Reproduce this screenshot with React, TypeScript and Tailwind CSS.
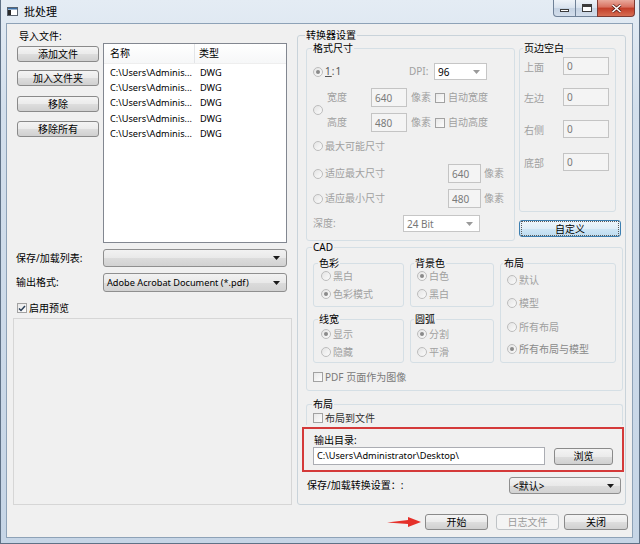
import React from "react";

const DIS = "text-[#a0a0a0]";

function Radio({ checked }: { checked?: boolean }) {
  return (
    <span className="flex h-[10px] w-[10px] shrink-0 items-center justify-center rounded-full border border-[#bdbdbd] bg-[linear-gradient(135deg,#e4e4e4,#fbfbfb)]">
      {checked && <span className="h-[4px] w-[4px] rounded-full bg-[#8a8a8a]" />}
    </span>
  );
}

function Check({ checked }: { checked?: boolean }) {
  return (
    <span className="flex h-[10px] w-[10px] shrink-0 items-center justify-center border border-[#a2a2a2] bg-[linear-gradient(135deg,#e8e8e8,#fdfdfd)]">
      {checked && (
        <svg width="8" height="7" viewBox="0 0 8 7">
          <path d="M1 3.5 L3 5.5 L7 1" fill="none" stroke="#2b3f57" strokeWidth="1.5" />
        </svg>
      )}
    </span>
  );
}

function Btn({
  children,
  className = "",
  kind = "normal",
}: {
  children: React.ReactNode;
  className?: string;
  kind?: "normal" | "disabled" | "focus";
}) {
  const style =
    kind === "disabled"
      ? "border-[#bfc3c6] bg-[#f4f4f4] text-[#9a9a9a]"
      : kind === "focus"
      ? "border-[#3c7fb1] bg-[linear-gradient(#eef6fb,#e0eef8_50%,#cfe6f5_50%,#bddcf0)] text-black"
      : "border-[#8a8a8a] bg-[linear-gradient(#f4f4f4,#ebebeb_50%,#dedede_50%,#d0d0d0)] text-black";
  return (
    <div
      className={`flex shrink-0 items-center justify-center rounded-[3px] border leading-[12px] ${style} ${className}`}
    >
      {kind === "focus" ? (
        <div className="m-[1px] flex h-full w-full items-center justify-center border border-dotted border-[#5a5a5a]">
          {children}
        </div>
      ) : (
        children
      )}
    </div>
  );
}

function Arrow({ color }: { color: string }) {
  return (
    <svg width="7" height="4" viewBox="0 0 7 4">
      <path d="M0 0h7L3.5 4z" fill={color} />
    </svg>
  );
}

function Combo({
  value,
  className = "",
  flat,
  latin,
}: {
  value: string;
  className?: string;
  flat?: boolean;
  latin?: boolean;
}) {
  return (
    <div
      className={`flex shrink-0 items-center justify-between pl-[3px] pr-[6px] ${
        flat
          ? "border border-[#c6c6c6] bg-white"
          : "rounded-[3px] border border-[#8f8f8f] bg-[linear-gradient(#f2f2f2,#e9e9e9_50%,#dcdcdc_50%,#d2d2d2)]"
      } ${className}`}
    >
      <span className={`leading-[12px] ${latin ? "text-[9.2px]" : ""}`}>{value}</span>
      <Arrow color={flat ? "#9a9a9a" : "#1a1a1a"} />
    </div>
  );
}

function TBox({
  value,
  className = "",
  top,
}: {
  value: string;
  className?: string;
  top?: boolean;
}) {
  return (
    <div
      className={`flex shrink-0 border border-[#c4c4c4] bg-[#f4f4f4] pl-[3px] leading-[12px] text-[#7a7a7a] ${
        top ? "items-start pt-[2px]" : "items-center"
      } ${className}`}
    >
      {value}
    </div>
  );
}

function Legend({ children, className = "" }: { children: React.ReactNode; className?: string }) {
  return <legend className={`px-[1px] leading-[12px] ${className}`}>{children}</legend>;
}

function AppIcon() {
  return (
    <svg width="11" height="9" viewBox="0 0 11 9">
      <rect x="0.5" y="0.5" width="10" height="8" fill="#fff" stroke="#5a6470" />
      <rect x="1" y="1" width="9" height="1.5" fill="#3a6ea5" />
      <rect x="1" y="3" width="3" height="5" fill="#2a2a2a" />
    </svg>
  );
}

export default function App() {
  const files = [1, 2, 3, 4, 5];
  return (
    <div className="flex h-[544px] w-[640px] flex-col overflow-hidden border-x border-b border-[#5f7186] bg-[linear-gradient(#e4ecf4,#d3dfec_20%,#c6d5e6)] font-['Noto_Sans','Noto_Sans_CJK_SC',sans-serif] text-[10px] text-black">
      {/* title bar */}
      <div className="flex h-[23px] shrink-0 items-start">
        <div className="ml-[6px] mt-[7px]">
          <AppIcon />
        </div>
        <div className="ml-[6px] mt-[4px] text-[11px] leading-[15px] text-black">批处理</div>
        <div className="ml-auto mr-[4px] flex">
          <div className="flex h-[17px] w-[23px] items-center justify-center rounded-bl-[4px] border border-t-0 border-[#6f8197] bg-[linear-gradient(#eef3f8,#d8e2ee_50%,#c4d2e2_50%,#d3deeb)]">
            <span className="mt-[5px] h-[3px] w-[9px] border border-[#3c3c3c] bg-white" />
          </div>
          <div className="flex h-[17px] w-[21px] items-center justify-center border-b border-[#6f8197] bg-[linear-gradient(#eef3f8,#d8e2ee_50%,#c4d2e2_50%,#d3deeb)]">
            <span className="h-[8px] w-[10px] border border-t-[3px] border-[#3c3c3c] bg-white" />
          </div>
          <div className="flex h-[17px] w-[38px] items-center justify-center rounded-br-[4px] border border-t-0 border-[#7e3a32] bg-[linear-gradient(#e9a99c,#d8705f_45%,#c23d28_50%,#d66d52)]">
            <svg width="11" height="9" viewBox="0 0 11 9">
              <path d="M1.5 1 L9.5 8 M9.5 1 L1.5 8" stroke="#5a1e16" strokeWidth="3" />
              <path d="M1.5 1 L9.5 8 M9.5 1 L1.5 8" stroke="#ffffff" strokeWidth="1.6" />
            </svg>
          </div>
        </div>
      </div>

      {/* client area */}
      <div className="ml-[5px] flex h-[515px] w-[627px] flex-col border border-[#8ea2b7] bg-[#f0f0f0]">
        <div className="flex">
          {/* left column */}
          <div className="flex w-[289px] shrink-0 flex-col pt-[5px]">
            <div className="h-[14px] pl-[12px] leading-[14px]">导入文件:</div>
            <div className="flex">
              <div className="ml-[10px] flex w-[82px] flex-col">
                <Btn className="mt-[3px] h-[16px] w-[82px]">添加文件</Btn>
                <Btn className="mt-[8px] h-[16px] w-[82px]">加入文件夹</Btn>
                <Btn className="mt-[10px] h-[16px] w-[82px]">移除</Btn>
                <Btn className="mt-[9px] h-[16px] w-[82px]">移除所有</Btn>
              </div>
              <div className="ml-[4px] h-[200px] w-[184px] border border-[#828790] bg-white">
                <div className="flex h-[20px] border-b border-[#eeeeee] bg-[linear-gradient(#ffffff,#f6f7f8)]">
                  <div className="flex w-[91px] items-center border-r border-[#e3e5e8] pl-[6px]">名称</div>
                  <div className="flex items-center pl-[4px]">类型</div>
                </div>
                <div className="pt-[1px] text-[9.2px]">
                  {files.map((i) => (
                    <div key={i} className="flex h-[15.3px] items-center">
                      <div className="w-[92px] pl-[6px]">C:\Users\Adminis...</div>
                      <div className="pl-[4px]">DWG</div>
                    </div>
                  ))}
                </div>
              </div>
            </div>
            <div className="mt-[6px] flex h-[18px] items-center">
              <div className="w-[96px] pl-[9px]">保存/加载列表:</div>
              <Combo value="" className="h-[18px] w-[184px]" />
            </div>
            <div className="mt-[6px] flex h-[19px] items-center">
              <div className="w-[96px] pl-[9px]">输出格式:</div>
              <Combo value="Adobe Acrobat Document (*.pdf)" latin className="h-[19px] w-[184px]" />
            </div>
            <div className="mt-[10px] flex h-[12px] items-center pl-[10px]">
              <Check checked />
              <span className="ml-[2px]">启用预览</span>
            </div>
            <div className="ml-[6px] mt-[4px] h-[187px] w-[279px] border border-[#d6d6d6] bg-[#f0f0f0]" />
          </div>

          {/* right column */}
          <div className="flex flex-col pt-[6px]">
            <fieldset className="ml-[1px] w-[329px] rounded-[3px] border border-[#c9d3da] pb-[10px]">
              <legend className="ml-[7px] px-[1px] leading-[11px]">转换器设置</legend>
              <div className="mt-[1px] flex items-start">
                {/* 格式尺寸 */}
                <fieldset className="ml-[8px] h-[199px] w-[209px] shrink-0 rounded-[3px] border border-[#d5dfe5]">
                  <Legend className="ml-[5px]">格式尺寸</Legend>
                  <div className="mt-[9px] flex h-[17px] items-center">
                    <div className="flex w-[102px] items-center gap-[2px] pl-[6px]">
                      <Radio checked />
                      <span className="tracking-[1px] text-[#555]">
                        <span className="underline">1</span>:1
                      </span>
                    </div>
                    <span className={`w-[25px] ${DIS}`}>DPI:</span>
                    <Combo value="96" flat className="h-[17px] w-[53px]" />
                  </div>
                  <div className="mt-[8px] flex items-center pl-[6px]">
                    <Radio />
                    <div className="ml-[4px] flex flex-col gap-[6px]">
                      {[
                        ["宽度", "640", "自动宽度"],
                        ["高度", "480", "自动高度"],
                      ].map(([l, v, c]) => (
                        <div key={l} className="flex h-[19px] items-center">
                          <span className={`w-[44px] ${DIS}`}>{l}</span>
                          <TBox value={v} className="h-[19px] w-[36px]" />
                          <span className={`ml-[4px] w-[20px] ${DIS}`}>像素</span>
                          <span className="ml-[4px]">
                            <Check />
                          </span>
                          <span className={`ml-[3px] ${DIS}`}>{c}</span>
                        </div>
                      ))}
                    </div>
                  </div>
                  <div className="mt-[7px] flex h-[14px] items-center gap-[2px] pl-[6px]">
                    <Radio />
                    <span className={DIS}>最大可能尺寸</span>
                  </div>
                  <div className="mt-[11px] flex h-[19px] items-center">
                    <div className="flex w-[141px] items-center gap-[2px] pl-[6px]">
                      <Radio />
                      <span className={DIS}>适应最大尺寸</span>
                    </div>
                    <TBox value="640" className="h-[19px] w-[33px]" />
                    <span className={`ml-[3px] ${DIS}`}>像素</span>
                  </div>
                  <div className="mt-[6px] flex h-[19px] items-center">
                    <div className="flex w-[141px] items-center gap-[2px] pl-[6px]">
                      <Radio />
                      <span className={DIS}>适应最小尺寸</span>
                    </div>
                    <TBox value="480" className="h-[19px] w-[33px]" />
                    <span className={`ml-[3px] ${DIS}`}>像素</span>
                  </div>
                  <div className="mt-[7px] flex h-[17px] items-center">
                    <span className={`w-[96px] pl-[6px] ${DIS}`}>深度:</span>
                    <Combo value="24 Bit" flat className="h-[17px] w-[77px] text-[#777]" />
                  </div>
                </fieldset>

                {/* 页边空白 */}
                <div className="ml-[4px] flex flex-col">
                  <fieldset className="h-[170px] w-[97px] rounded-[3px] border border-[#d5dfe5]">
                    <Legend className="ml-[3px]">页边空白</Legend>
                    {[
                      ["上面", "mt-[3px]"],
                      ["左边", "mt-[13px]"],
                      ["右侧", "mt-[14px]"],
                      ["底部", "mt-[15px]"],
                    ].map(([l, m]) => (
                      <div key={l} className={`flex h-[18px] items-center ${m}`}>
                        <span className={`w-[43px] pl-[4px] pt-[3px] ${DIS}`}>{l}</span>
                        <TBox value="0" top className="h-[18px] w-[46px]" />
                      </div>
                    ))}
                  </fieldset>
                  <Btn kind="focus" className="mt-[8px] h-[17px] w-[102px]">
                    自定义
                  </Btn>
                </div>
              </div>

              {/* CAD */}
              <fieldset className="ml-[8px] h-[150px] w-[317px] rounded-[3px] border border-[#d5dfe5]">
                <Legend className="ml-[5px]">CAD</Legend>
                <div className="mt-[4px] flex items-start">
                  <div className="ml-[6px] flex flex-col">
                    <fieldset className="h-[50px] w-[91px] rounded-[3px] border border-[#d5dfe5]">
                      <Legend className="ml-[4px]">色彩</Legend>
                      <div className="flex h-[14px] items-center gap-[2px] pl-[7px]">
                        <Radio />
                        <span className={DIS}>黑白</span>
                      </div>
                      <div className="mt-[4px] flex h-[14px] items-center gap-[2px] pl-[7px]">
                        <Radio checked />
                        <span className={DIS}>色彩模式</span>
                      </div>
                    </fieldset>
                    <fieldset className="mt-[6px] h-[50px] w-[91px] rounded-[3px] border border-[#d5dfe5]">
                      <Legend className="ml-[4px]">线宽</Legend>
                      <div className="mt-[2px] flex h-[14px] items-center gap-[2px] pl-[7px]">
                        <Radio checked />
                        <span className={DIS}>显示</span>
                      </div>
                      <div className="mt-[4px] flex h-[14px] items-center gap-[2px] pl-[7px]">
                        <Radio />
                        <span className={DIS}>隐藏</span>
                      </div>
                    </fieldset>
                  </div>
                  <div className="ml-[6px] flex flex-col">
                    <fieldset className="h-[50px] w-[84px] rounded-[3px] border border-[#d5dfe5]">
                      <Legend className="ml-[3px]">背景色</Legend>
                      <div className="flex h-[14px] items-center gap-[2px] pl-[6px]">
                        <Radio checked />
                        <span className={DIS}>白色</span>
                      </div>
                      <div className="mt-[4px] flex h-[14px] items-center gap-[2px] pl-[6px]">
                        <Radio />
                        <span className={DIS}>黑白</span>
                      </div>
                    </fieldset>
                    <fieldset className="mt-[6px] h-[50px] w-[84px] rounded-[3px] border border-[#d5dfe5]">
                      <Legend className="ml-[3px]">圆弧</Legend>
                      <div className="mt-[2px] flex h-[14px] items-center gap-[2px] pl-[6px]">
                        <Radio checked />
                        <span className={DIS}>分割</span>
                      </div>
                      <div className="mt-[4px] flex h-[14px] items-center gap-[2px] pl-[6px]">
                        <Radio />
                        <span className={DIS}>平滑</span>
                      </div>
                    </fieldset>
                  </div>
                  <fieldset className="ml-[6px] h-[106px] w-[116px] rounded-[3px] border border-[#d5dfe5]">
                    <Legend className="ml-[2px]">布局</Legend>
                    <div className="mt-[4px] flex h-[14px] items-center gap-[2px] pl-[6px]">
                      <Radio />
                      <span className={DIS}>默认</span>
                    </div>
                    <div className="mt-[9px] flex h-[14px] items-center gap-[2px] pl-[6px]">
                      <Radio />
                      <span className={DIS}>模型</span>
                    </div>
                    <div className="mt-[10px] flex h-[14px] items-center gap-[2px] pl-[6px]">
                      <Radio />
                      <span className={DIS}>所有布局</span>
                    </div>
                    <div className="mt-[8px] flex h-[14px] items-center gap-[2px] pl-[6px]">
                      <Radio checked />
                      <span className="text-[#8a8a8a]">所有布局与模型</span>
                    </div>
                  </fieldset>
                </div>
                <div className="mt-[7px] flex h-[14px] items-center gap-[2px] pl-[6px]">
                  <Check />
                  <span className="text-[#7a7a7a]">PDF 页面作为图像</span>
                </div>
              </fieldset>

              {/* 布局 */}
              <fieldset className="ml-[8px] mt-[7px] w-[317px] rounded-t-[3px] border border-b-0 border-[#d5dfe5]">
                <Legend className="ml-[5px]">布局</Legend>
                <div className="mt-[1px] flex h-[14px] items-center gap-[2px] pl-[6px]">
                  <Check />
                  <span className="text-[#333]">布局到文件</span>
                </div>
              </fieldset>

              {/* 输出目录 (highlighted) */}
              <div className="ml-[4px] mt-[2px] w-[322px] border-2 border-[#d43a3a] pb-[5px]">
                <div className="mt-[4px] h-[14px] pl-[10px] leading-[14px]">输出目录:</div>
                <div className="flex items-center">
                  <div className="ml-[9px] flex h-[18px] w-[232px] items-center border border-[#abadb3] bg-white pl-[3px] text-[9.2px]">
                    C:\Users\Administrator\Desktop\
                  </div>
                  <Btn className="ml-[9px] h-[17px] w-[59px]">浏览</Btn>
                </div>
              </div>

              <div className="mt-[5px] flex h-[17px] items-center">
                <span className="pl-[9px]">保存/加载转换设置：:</span>
                <Combo value="<默认>" className="ml-auto mr-[4px] h-[17px] w-[112px]" />
              </div>
            </fieldset>
          </div>
        </div>

        {/* bottom buttons */}
        <div className="mt-[9px] flex items-center justify-end pr-[4px]">
          <svg width="34" height="10" viewBox="0 0 34 10" className="mr-[4px]">
            <path d="M0 5.5 L21 3 L21 0 L34 5 L21 10 L21 7 Z" fill="#e5302a" />
          </svg>
          <Btn className="h-[16px] w-[63px]">开始</Btn>
          <Btn kind="disabled" className="ml-[8px] h-[16px] w-[63px]">
            日志文件
          </Btn>
          <Btn className="ml-[5px] h-[16px] w-[64px]">关闭</Btn>
        </div>
      </div>
    </div>
  );
}
